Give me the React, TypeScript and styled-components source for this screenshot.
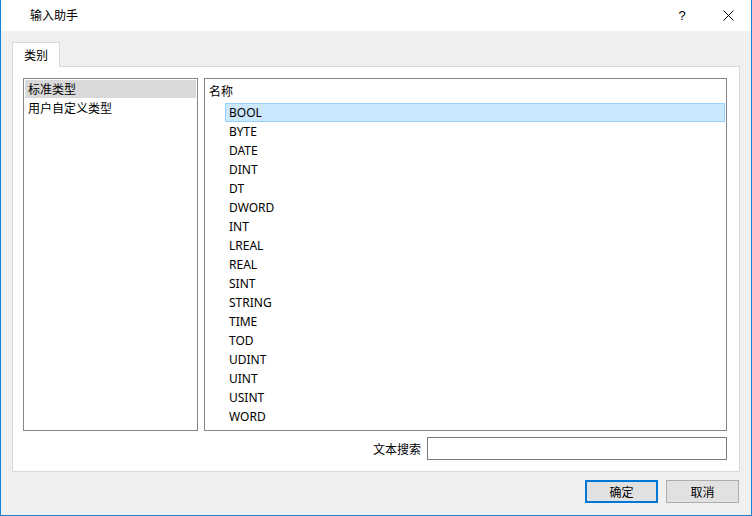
import React from "react";
import styled, { createGlobalStyle } from "styled-components";

const Global = createGlobalStyle`
  html, body { margin: 0; padding: 0; background: #ffffff; }
  * { box-sizing: border-box; }
  body {
    font-family: "Noto Sans", "Noto Sans CJK SC", sans-serif;
    font-size: 12px;
    color: #000000;
  }
`;

const Window = styled.div`
  width: 752px;
  height: 516px;
  display: flex;
  flex-direction: column;
  border-left: 1px solid #1883d7;
  border-right: 1px solid #1883d7;
  border-bottom: 1px solid #1883d7;
  background: #f0f0f0;
`;

const TitleBar = styled.div`
  height: 31px;
  flex: none;
  background: #ffffff;
  display: flex;
  align-items: center;
  padding-left: 29px;
`;

const Title = styled.div`
  flex: 1;
  font-family: "Noto Sans CJK SC", sans-serif;
  font-size: 12px;
  line-height: 16px;
  margin-top: -1px;
`;

const TitleButton = styled.div`
  width: 46px;
  height: 31px;
  display: flex;
  align-items: center;
  justify-content: center;
  font-family: "Liberation Sans", sans-serif;
  font-size: 13px;
  color: #000;
`;

const Body = styled.div`
  flex: 1;
  display: flex;
  flex-direction: column;
  padding: 11px 12px 12px 11px;
`;

const TabStrip = styled.div`
  display: flex;
  height: 24px;
  flex: none;
`;

const Tab = styled.div`
  width: 48px;
  height: 25px;
  background: #ffffff;
  border: 1px solid #d9d9d9;
  border-bottom: none;
  display: flex;
  align-items: center;
  justify-content: center;
  font-family: "Noto Sans CJK SC", sans-serif;
  padding-bottom: 1px;
  position: relative;
  z-index: 1;
`;

const TabPage = styled.div`
  width: 728px;
  height: 406px;
  flex: none;
  background: #ffffff;
  border: 1px solid #d9d9d9;
  display: flex;
  flex-direction: column;
  padding: 11px 12px 0 10px;
`;

const Lists = styled.div`
  display: flex;
  gap: 6px;
  height: 353px;
`;

const ListBox = styled.div<{ $w: number }>`
  width: ${(p) => p.$w}px;
  height: 100%;
  border: 1px solid #828790;
  display: flex;
  flex-direction: column;
  padding: 1px;
`;

const CatItem = styled.div<{ $sel?: boolean }>`
  height: 18px;
  line-height: 18px;
  padding-left: 3px;
  background: ${(p) => (p.$sel ? "#d9d9d9" : "transparent")};
  font-family: "Noto Sans CJK SC", sans-serif;
  margin-bottom: 1px;
`;

const Header = styled.div`
  height: 23px;
  line-height: 21px;
  padding-left: 3px;
  font-family: "Noto Sans CJK SC", sans-serif;
`;

const TypeItem = styled.div<{ $sel?: boolean }>`
  height: 19px;
  line-height: 17px;
  margin-left: 19px;
  padding-left: 3px;
  border: 1px solid ${(p) => (p.$sel ? "#99d1ff" : "transparent")};
  background: ${(p) => (p.$sel ? "#cce8ff" : "transparent")};
`;

const SearchRow = styled.div`
  display: flex;
  justify-content: flex-end;
  align-items: center;
  gap: 6px;
  margin-top: 6px;
`;

const SearchLabel = styled.div`
  font-family: "Noto Sans CJK SC", sans-serif;
`;

const SearchInput = styled.div`
  width: 300px;
  height: 23px;
  border: 1px solid #7a7a7a;
  background: #fff;
`;

const Footer = styled.div`
  display: flex;
  justify-content: flex-end;
  gap: 8px;
  margin-top: 8px;
`;

const Button = styled.div<{ $primary?: boolean }>`
  width: 73px;
  height: 23px;
  background: #e1e1e1;
  border: ${(p) => (p.$primary ? "2px solid #0078d7" : "1px solid #adadad")};
  display: flex;
  align-items: center;
  justify-content: center;
  font-family: "Noto Sans CJK SC", sans-serif;
`;

const types = [
  "BOOL", "BYTE", "DATE", "DINT", "DT", "DWORD", "INT", "LREAL", "REAL",
  "SINT", "STRING", "TIME", "TOD", "UDINT", "UINT", "USINT", "WORD",
];

export default function App() {
  return (
    <>
      <Global />
      <Window>
        <TitleBar>
          <Title>输入助手</Title>
          <TitleButton>?</TitleButton>
          <TitleButton>
            <svg width="11" height="11" viewBox="0 0 11 11">
              <path d="M0.5 0.5 L10.5 10.5 M10.5 0.5 L0.5 10.5" stroke="#000" strokeWidth="1" fill="none" />
            </svg>
          </TitleButton>
        </TitleBar>
        <Body>
          <TabStrip>
            <Tab>类别</Tab>
          </TabStrip>
          <TabPage>
            <Lists>
              <ListBox $w={175}>
                <CatItem $sel>标准类型</CatItem>
                <CatItem>用户自定义类型</CatItem>
              </ListBox>
              <ListBox $w={523}>
                <Header>名称</Header>
                {types.map((t, i) => (
                  <TypeItem key={t} $sel={i === 0}>{t}</TypeItem>
                ))}
              </ListBox>
            </Lists>
            <SearchRow>
              <SearchLabel>文本搜索</SearchLabel>
              <SearchInput />
            </SearchRow>
          </TabPage>
          <Footer>
            <Button $primary>确定</Button>
            <Button>取消</Button>
          </Footer>
        </Body>
      </Window>
    </>
  );
}
